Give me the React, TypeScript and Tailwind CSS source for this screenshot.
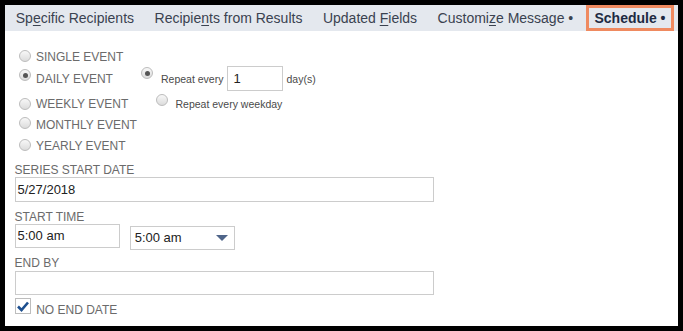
import React from "react";

const TABS = [
  { before: "Sp", key: "e", after: "cific Recipients" },
  { before: "Recipie", key: "n", after: "ts from Results" },
  { before: "Updated ", key: "F", after: "ields" },
  { before: "Customi", key: "z", after: "e Message •" },
];

function Radio({ checked = false, className = "" }: { checked?: boolean; className?: string }) {
  return (
    <span
      className={`inline-flex h-[12px] w-[12px] shrink-0 items-center justify-center rounded-full border border-[#bcbcbc] bg-linear-to-b from-[#f8f8f8] to-[#dcdcdc] ${className}`}
    >
      {checked && <span className="h-[5px] w-[5px] rounded-full bg-[#555]" />}
    </span>
  );
}

export default function App() {
  return (
    <div className="h-[331px] w-[683px] bg-black p-[5px] font-['Liberation_Sans',Arial,sans-serif]">
      <div className="flex h-full flex-col bg-white">
        {/* Tabs */}
        <div className="flex h-[26px] shrink-0 items-stretch bg-[#e4e8ee] pl-[0.5px] text-[14px] leading-[16px] text-[#3a4250]">
          {TABS.map((t) => (
            <div key={t.before} className="flex items-center px-[10.25px]">
              <span>
                {t.before}
                <span className="underline underline-offset-2">{t.key}</span>
                {t.after}
              </span>
            </div>
          ))}
          <div className="ml-[3px] flex items-center border-[3px] border-[#ef8a60] px-[5px] font-bold text-[#1e2a42]">
            Schedule •
          </div>
        </div>

        {/* Recurrence */}
        <div className="flex flex-col pl-[14px] pt-[16px] text-[12px] leading-[14px] text-[#6b6b6b]">
          <div className="flex h-[19px] items-center">
            <Radio className="mb-[2px]" />
            <span className="ml-[5px]">SINGLE EVENT</span>
          </div>
          <div className="flex h-[25px] items-center">
            <div className="flex w-[122px] items-center">
              <Radio checked className="mb-[7px]" />
              <span className="ml-[5px]">DAILY EVENT</span>
            </div>
            <Radio checked className="mb-[11px]" />
            <span className="ml-[8px] text-[10.5px] text-[#4a4a4a]">Repeat every</span>
            <div className="ml-[4px] flex h-[25px] w-[56px] items-center border border-[#cccccc] px-[5px] text-[13px] text-[#222]">
              1
            </div>
            <span className="ml-[3px] text-[10.5px] text-[#4a4a4a]">day(s)</span>
          </div>
          <div className="mt-[2px] flex h-[21px] items-center">
            <div className="flex w-[122px] items-center">
              <Radio />
              <span className="ml-[5px]">WEEKLY EVENT</span>
            </div>
            <Radio className="mb-[7px] ml-[15px]" />
            <span className="ml-[7.5px] text-[10.5px] text-[#4a4a4a]">Repeat every weekday</span>
          </div>
          <div className="flex h-[21px] items-center">
            <Radio className="mb-[4px]" />
            <span className="ml-[5px]">MONTHLY EVENT</span>
          </div>
          <div className="flex h-[21px] items-center">
            <Radio className="mb-[2px]" />
            <span className="ml-[5px]">YEARLY EVENT</span>
          </div>
        </div>

        {/* Dates */}
        <div className="flex flex-col pl-[9.5px] text-[12px] leading-[14px] text-[#6b6b6b]">
          <div className="mt-[6.8px]">SERIES START DATE</div>
          <div className="mt-[0.5px] flex h-[24.5px] w-[419.5px] items-center border border-[#cccccc] px-[2px] text-[13px] text-[#222]">
            5/27/2018
          </div>

          <div className="mt-[8px]">START TIME</div>
          <div className="flex items-start">
            <div className="flex h-[24.7px] w-[105.5px] items-center border border-[#cccccc] px-[2px] text-[13px] text-[#222]">
              5:00 am
            </div>
            <div className="ml-[10.2px] mt-[2.7px] flex h-[24px] w-[105px] items-center justify-between border border-[#cccccc] pl-[3.5px] pr-[6px] text-[13px] text-[#222]">
              <span>5:00 am</span>
              <svg width="12" height="6" viewBox="0 0 12 6">
                <path d="M0 0 H12 L6 6 Z" fill="#4f6589" />
              </svg>
            </div>
          </div>

          <div className="mt-[5.8px]">END BY</div>
          <div className="mt-[0.5px] h-[24.7px] w-[419.5px] border border-[#cccccc]" />

          <div className="mt-[2.6px] flex items-start">
            <span className="flex h-[16px] w-[16px] items-center justify-center border border-[#bdbdbd] bg-white">
              <svg width="12" height="11" viewBox="0 0 12 11">
                <path d="M1 5.5 L4.5 9 L11 1.5" fill="none" stroke="#1d4f8f" strokeWidth="2.6" />
              </svg>
            </span>
            <span className="ml-[5.7px] mt-[5.2px]">NO END DATE</span>
          </div>
        </div>
      </div>
    </div>
  );
}
